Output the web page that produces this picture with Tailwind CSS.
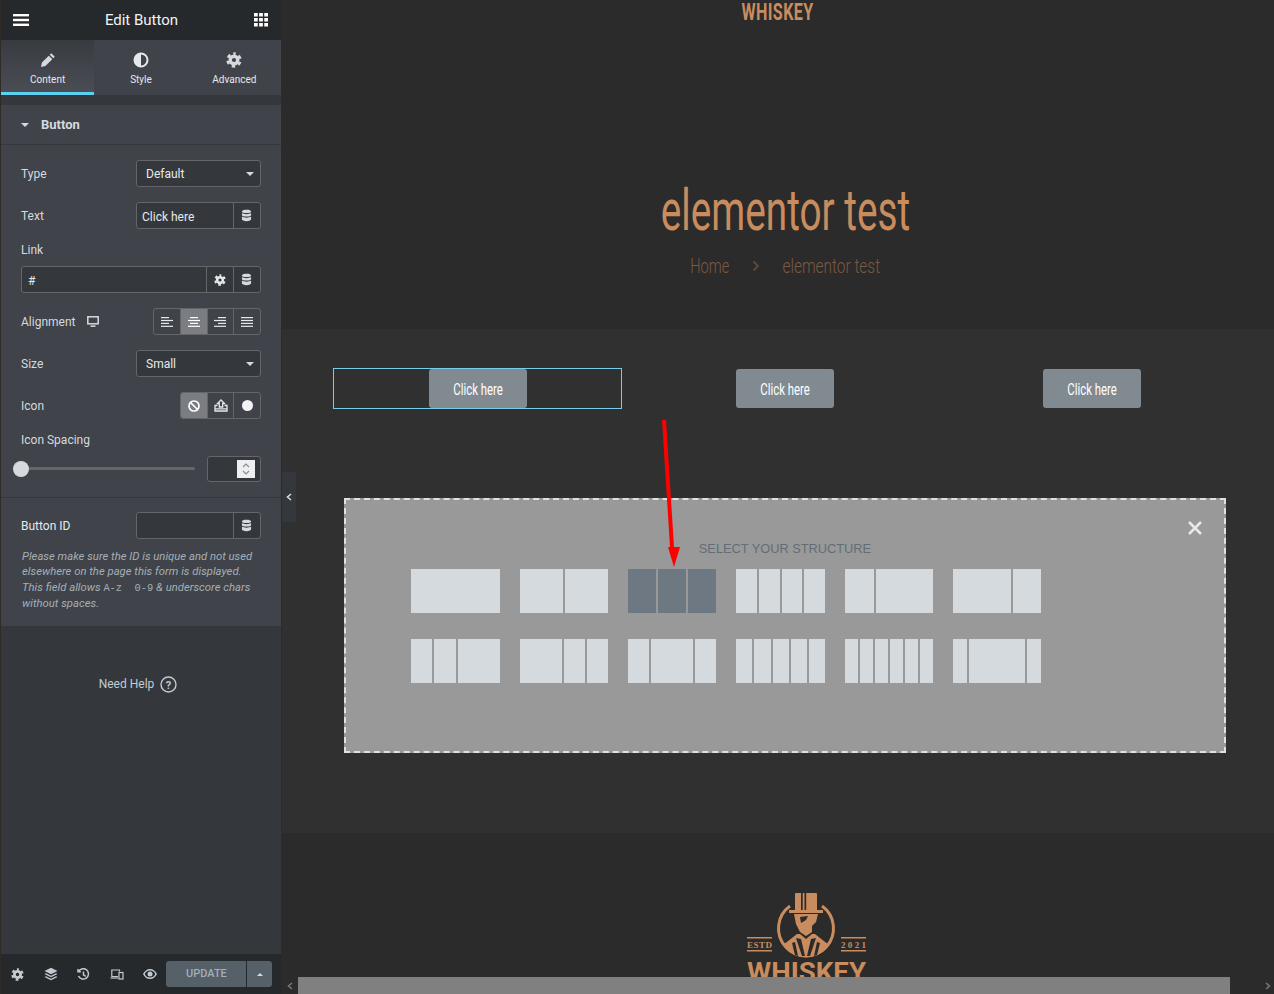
<!DOCTYPE html>
<html lang="en">
  <head>
    <meta charset="UTF-8" />
    <meta name="viewport" content="width=device-width, initial-scale=1.0" />
    <script src="https://cdn.jsdelivr.net/npm/@tailwindcss/browser@4"></script>
    <title>Edit Button</title>
  </head>
  <body class="h-[994px] w-[1274px] overflow-hidden bg-[#2b2b2b] font-['Roboto',sans-serif]">
    <svg width="0" height="0" class="absolute">
      <defs>
        <symbol id="gear" viewBox="0 0 16 16">
          <circle cx="8" cy="8" r="3.8" fill="none" stroke="currentColor" stroke-width="3.400" />
          <circle cx="8" cy="8" r="6.300" fill="none" stroke="currentColor" stroke-width="2.800" stroke-dasharray="3.400 3.200" stroke-dashoffset="1.700" transform="rotate(-90 8 8)" />
        </symbol>
        <symbol id="db" viewBox="0 0 12 14">
          <path fill="currentColor" d="M6 .6C3 .6 1 1.300 1 2.500S3 4.400 6 4.400s5-.7 5-1.900S9 .6 6 .6zM1 4.300v2.100c0 1.100 2 1.800 5 1.800s5-.7 5-1.800V4.300C10 5.200 8 5.500 6 5.500S2 5.200 1 4.300zM1 8.200v3c0 1.200 2 2 5 2s5-.8 5-2v-3c-1 .9-3 1.200-5 1.200S2 9.100 1 8.200z" />
        </symbol>
      </defs>
    </svg>

    <div class="flex h-full">
      <!-- Editor panel -->
      <aside class="relative z-10 flex h-full w-[282px] shrink-0 flex-col border-r border-[#2b2b2b] border-l border-l-[#2e2b29] bg-[#34383c] text-[12px] text-[#d5dadf]">
        <header class="flex h-10 items-center justify-between bg-[#26292c] pl-3 pr-[13px] text-white">
          <svg width="16" height="12" viewBox="0 0 16 12" fill="#fff"><rect y="0" width="16" height="2.400" /><rect y="4.800" width="16" height="2.400" /><rect y="9.600" width="16" height="2.400" /></svg>
          <h1 class="text-[15px] leading-none text-[#f1f3f5]">Edit Button</h1>
          <svg width="14" height="14" viewBox="0 0 15 14" preserveAspectRatio="none" fill="#fff">
            <rect x="0" width="4" height="3.500" /><rect x="5.500" width="4" height="3.500" /><rect x="11" width="4" height="3.500" />
            <rect x="0" y="5" width="4" height="3.500" /><rect x="5.500" y="5" width="4" height="3.500" /><rect x="11" y="5" width="4" height="3.500" />
            <rect x="0" y="10" width="4" height="3.500" /><rect x="5.500" y="10" width="4" height="3.500" /><rect x="11" y="10" width="4" height="3.500" />
          </svg>
        </header>

        <nav class="grid h-[55px] grid-cols-3 bg-[#404349] text-[10px] text-[#e6e9ec]">
          <div class="flex flex-col items-center border-b-[3px] border-[#5bd0f2] bg-gradient-to-b from-[#383b40] to-[#4a4d54] pt-[12px]">
            <svg width="16" height="16" viewBox="0 0 16 16" fill="#d5dadf"><path d="M11.300 1.200 14.800 4.700 13.200 6.300 9.700 2.800zM8.800 3.700 12.300 7.200 5.400 14.100 1 15 1.900 10.600z" /></svg>
            <span class="mt-[5px] leading-[14px]">Content</span>
          </div>
          <div class="flex flex-col items-center pt-[12px]">
            <svg width="16" height="16" viewBox="0 0 16 16"><circle cx="8" cy="8" r="6.500" fill="none" stroke="#e6e9ec" stroke-width="2" /><path fill="#e6e9ec" d="M8 1.500a6.500 6.500 0 0 0 0 13z" /></svg>
            <span class="mt-[5px] leading-[14px]">Style</span>
          </div>
          <div class="flex flex-col items-center pt-[12px]">
            <svg width="16" height="16" class="text-[#d5dadf]"><use href="#gear" /></svg>
            <span class="mt-[5px] leading-[14px]">Advanced</span>
          </div>
        </nav>

        <section class="mt-[10px] bg-[#404349]">
          <div class="flex h-10 items-center border-b border-[#34383c] pl-5 text-[13px] font-bold text-[#d5dadf]">
            <span class="h-0 w-0 border-x-[4px] border-t-[4px] border-x-transparent border-t-[#d5dadf]"></span>
            <span class="ml-3">Button</span>
          </div>

          <div class="px-5 pb-[15px]">
            <div class="mt-[15px] flex h-[27px] items-center justify-between">
              <label>Type</label>
              <div class="flex h-[27px] w-[125px] items-center justify-between rounded-[3px] border border-[#64666a] bg-[#34383c] pl-[9px] pr-[6px] text-[#e6e9ec]">
                Default
                <span class="h-0 w-0 border-x-[4px] border-t-[4px] border-x-transparent border-t-[#d5dadf]"></span>
              </div>
            </div>

            <div class="mt-[15px] flex h-[27px] items-center justify-between">
              <label>Text</label>
              <div class="flex h-[27px] w-[125px] items-center rounded-[3px] border border-[#64666a] bg-[#34383c] text-[#e6e9ec]">
                <span class="flex-1 pl-[5px] pt-[2px]">Click here</span>
                <span class="flex h-full w-[27px] items-center justify-center border-l border-[#64666a] pr-px"><svg width="11" height="13" class="text-[#d5dadf]"><use href="#db" /></svg></span>
              </div>
            </div>

            <label class="mt-[13px] block h-[17px] leading-[17px]">Link</label>
            <div class="mt-[7px] flex h-[27px] items-center rounded-[3px] border border-[#64666a] bg-[#34383c] text-[#e6e9ec]">
              <span class="flex-1 pl-[6px] pt-[2px]">#</span>
              <span class="flex h-full w-[27px] items-center justify-center border-l border-[#64666a]"><svg width="12" height="12" class="text-[#e6e9ec]"><use href="#gear" /></svg></span>
              <span class="flex h-full w-[27px] items-center justify-center border-l border-[#64666a] pr-px"><svg width="11" height="13" class="text-[#d5dadf]"><use href="#db" /></svg></span>
            </div>

            <div class="mt-[15px] flex h-[27px] items-center justify-between">
              <div class="flex items-center gap-[12px]">
                <label>Alignment</label>
                <svg width="12" height="11" viewBox="0 0 12 11" fill="none"><rect x=".8" y=".8" width="10.400" height="7" stroke="#d5dadf" stroke-width="1.500" /><rect x="3.500" y="9.400" width="5" height="1.500" fill="#d5dadf" /></svg>
              </div>
              <div class="flex h-[27px] w-[108px] overflow-hidden rounded-[3px] border border-[#64666a]">
                <span class="flex flex-1 items-center justify-center">
                  <svg width="12" height="10" viewBox="0 0 12 10" fill="#e6e9ec"><rect width="8" height="1.200" /><rect y="2.900" width="12" height="1.200" /><rect y="5.800" width="8" height="1.200" /><rect y="8.700" width="12" height="1.200" /></svg>
                </span>
                <span class="flex flex-1 items-center justify-center border-l border-[#64666a] bg-[#7a7d82]">
                  <svg width="12" height="10" viewBox="0 0 12 10" fill="#fff"><rect x="2" width="8" height="1.200" /><rect y="2.900" width="12" height="1.200" /><rect x="2" y="5.800" width="8" height="1.200" /><rect y="8.700" width="12" height="1.200" /></svg>
                </span>
                <span class="flex flex-1 items-center justify-center border-l border-[#64666a]">
                  <svg width="12" height="10" viewBox="0 0 12 10" fill="#e6e9ec"><rect x="4" width="8" height="1.200" /><rect y="2.900" width="12" height="1.200" /><rect x="4" y="5.800" width="8" height="1.200" /><rect y="8.700" width="12" height="1.200" /></svg>
                </span>
                <span class="flex flex-1 items-center justify-center border-l border-[#64666a]">
                  <svg width="12" height="10" viewBox="0 0 12 10" fill="#e6e9ec"><rect width="12" height="1.200" /><rect y="2.900" width="12" height="1.200" /><rect y="5.800" width="12" height="1.200" /><rect y="8.700" width="12" height="1.200" /></svg>
                </span>
              </div>
            </div>

            <div class="mt-[15px] flex h-[27px] items-center justify-between">
              <label>Size</label>
              <div class="flex h-[27px] w-[125px] items-center justify-between rounded-[3px] border border-[#64666a] bg-[#34383c] pl-[9px] pr-[6px] text-[#e6e9ec]">
                Small
                <span class="h-0 w-0 border-x-[4px] border-t-[4px] border-x-transparent border-t-[#d5dadf]"></span>
              </div>
            </div>

            <div class="mt-[15px] flex h-[27px] items-center justify-between">
              <label>Icon</label>
              <div class="flex h-[27px] w-[81px] overflow-hidden rounded-[3px] border border-[#64666a]">
                <span class="flex flex-1 items-center justify-center bg-[#7a7d82]">
                  <svg width="12" height="12" viewBox="0 0 12 12" fill="none" stroke="#fff" stroke-width="1.700"><circle cx="6" cy="6" r="5" /><path d="M2.500 2.500 9.500 9.500" /></svg>
                </span>
                <span class="flex flex-1 items-center justify-center border-l border-[#64666a]">
                  <svg width="14" height="13" viewBox="0 0 14 13" fill="none" stroke="#e6e9ec" stroke-width="1.300"><path d="M7 1 3.500 4.500H5.300V8H8.700V4.500H10.500z" /><path d="M3.500 6.500H1V12H13V6.500H10.500" /><path d="M1 9.800H13" /></svg>
                </span>
                <span class="flex flex-1 items-center justify-center border-l border-[#64666a]">
                  <span class="h-[11px] w-[11px] rounded-full bg-[#f1f3f5]"></span>
                </span>
              </div>
            </div>

            <label class="mt-[13px] block h-[17px] leading-[17px]">Icon Spacing</label>
            <div class="mt-[7px] flex h-[26px] items-center justify-between">
              <div class="relative -mt-px h-[3px] w-[174px] rounded-full bg-[#64666a]">
                <span class="absolute -left-2 -top-[6.500px] h-4 w-4 rounded-full bg-[#d5dadf]"></span>
              </div>
              <div class="flex h-[26px] w-[54px] items-center justify-end rounded-[3px] border border-[#64666a] bg-[#34383c] pr-[5px]">
                <span class="flex h-[18px] w-[18px] flex-col items-center justify-center gap-[2px] bg-[#eeeff1]">
                  <svg width="8" height="5" viewBox="0 0 8 5" fill="none" stroke="#8a8d92" stroke-width="1.200"><path d="M1 4 4 1 7 4" /></svg>
                  <svg width="8" height="5" viewBox="0 0 8 5" fill="none" stroke="#8a8d92" stroke-width="1.200"><path d="M1 1 4 4 7 1" /></svg>
                </span>
              </div>
            </div>
          </div>

          <div class="border-t border-[#34383c] px-5 pb-[14.500px] pt-[14px]">
            <div class="flex h-[27px] items-center justify-between">
              <label class="text-[#e6e9ec]">Button ID</label>
              <div class="flex h-[27px] w-[125px] items-center rounded-[3px] border border-[#64666a] bg-[#34383c]">
                <span class="flex-1"></span>
                <span class="flex h-full w-[27px] items-center justify-center border-l border-[#64666a] pr-px"><svg width="11" height="13" class="text-[#d5dadf]"><use href="#db" /></svg></span>
              </div>
            </div>
            <p class="ml-px mt-[9.500px] whitespace-nowrap text-[11.300px] italic leading-[15.500px] text-[#a4afb7]">
              Please make sure the ID is unique and not used<br />elsewhere on the page this form is displayed.<br />This field allows <code class="font-['Liberation_Mono',monospace] text-[10.400px] not-italic">A-z&nbsp;&nbsp;0-9</code> &amp; underscore chars<br />without spaces.
            </p>
          </div>
        </section>

        <div class="mt-[49px] flex items-center justify-center gap-[6px] pr-[6px] text-[#c2cbd2]">
          <span>Need Help</span>
          <svg width="17" height="17" viewBox="0 0 17 17" fill="none"><circle cx="8.500" cy="8.500" r="7.500" stroke="#c2cbd2" stroke-width="1.400" /><text x="8.500" y="12.500" text-anchor="middle" font-size="11" font-weight="700" fill="#c2cbd2">?</text></svg>
        </div>

        <footer class="mt-auto flex h-10 items-center bg-[#26292c] pl-[10px] pr-[9px]">
          <div class="flex w-[156px] items-center text-[#c2cbd2]">
            <span class="flex w-[33px]"><svg width="13" height="13"><use href="#gear" /></svg></span>
            <span class="flex w-[33px]">
              <svg width="14" height="14" viewBox="0 0 14 14" fill="currentColor"><path d="M7 .8 13.500 4 7 7.200.5 4z" /><path d="M2 6.200.5 7 7 10.200 13.500 7 12 6.200 7 8.700z" /><path d="M2 9.200.5 10 7 13.200 13.500 10 12 9.200 7 11.700z" /></svg>
            </span>
            <span class="flex w-[33px]">
              <svg width="13" height="13" viewBox="0 0 13 13" fill="none" stroke="currentColor" stroke-width="1.500"><path d="M1.800 3.200A5.200 5.200 0 1 1 1.500 8" /><path d="M6.500 3.500V6.800L8.800 8.300" /><path d="M1 1V3.800H3.800" /></svg>
            </span>
            <span class="flex w-[33px]">
              <svg width="14" height="12" viewBox="0 0 14 12" fill="none" stroke="currentColor" stroke-width="1.200"><path d="M8 8.500H1.800V2H9.500V3.500" /><path d="M.5 10H8" /><rect x="9" y="4.500" width="4" height="6.500" /></svg>
            </span>
            <span class="flex">
              <svg width="14" height="10" viewBox="0 0 14 10"><path fill="currentColor" d="M7 0C4 0 1.500 2 0 5c1.500 3 4 5 7 5s5.500-2 7-5c-1.500-3-4-5-7-5zm0 8.500A5.700 5.700 0 0 1 1.700 5 5.700 5.700 0 0 1 7 1.500 5.700 5.700 0 0 1 12.300 5 5.700 5.700 0 0 1 7 8.500z" /><circle cx="7" cy="5" r="2.500" fill="currentColor" /></svg>
            </span>
          </div>
          <div class="flex h-[26px] w-[106px] overflow-hidden rounded-[3px] bg-[#556068] text-[#a4afb7]">
            <span class="flex w-[80px] items-center justify-center pt-px text-[11px] font-medium">UPDATE</span>
            <span class="flex flex-1 items-center justify-center border-l border-[#26292c]">
              <span class="h-0 w-0 border-x-[3.500px] border-b-[3.500px] border-x-transparent border-b-[#d5dadf]"></span>
            </span>
          </div>
        </footer>
      </aside>

      <!-- Page preview -->
      <main class="relative h-full w-[992px] shrink-0 overflow-hidden">
        <div class="w-[1006px]">
          <section class="h-[329px] bg-[#2b2b2b]">
            <div class="h-6 pr-[14px] pt-px text-center">
              <span class="inline-block scale-x-[.7] text-[23px] font-bold leading-6 tracking-wide text-[#c98c5e]">WHISKEY</span>
            </div>
            <div class="mt-[152px] text-center">
              <h2 class="inline-block h-[70px] scale-x-[.68] text-[57px] font-normal leading-[70px] text-[#c98c5e]">elementor test</h2>
            </div>
            <div class="mt-[5px] flex items-center justify-center gap-[22px] text-[#7b5a43]">
              <span class="flex w-[40px] justify-center"><span class="inline-block scale-x-[.73] whitespace-nowrap text-[20px] font-light">Home</span></span>
              <svg width="8" height="12" viewBox="0 0 8 12" fill="none" stroke="#5d4a3c" stroke-width="1.800"><path d="M1.500 1.500 6 6 1.500 10.500" /></svg>
              <span class="flex w-[98px] justify-center"><span class="inline-block scale-x-[.77] whitespace-nowrap text-[20px] font-light">elementor test</span></span>
            </div>
          </section>

          <section class="relative h-[504px] bg-[#303030]">
            <div class="mx-auto w-[921px] pt-[40px]">
              <div class="grid grid-cols-3">
                <div class="-mt-px ml-[8px] mr-[10px] flex h-[41px] items-center justify-center border border-[#76cfea] pl-px">
                  <a class="flex h-[39px] w-[98px] items-center justify-center rounded-[3px] bg-[#818a91] pl-px pt-[3px] text-white"><span class="inline-block scale-x-[.67] whitespace-nowrap text-[17px]">Click here</span></a>
                </div>
                <div class="flex h-[39px] justify-center">
                  <a class="flex h-[39px] w-[98px] items-center justify-center rounded-[3px] bg-[#818a91] pt-[3px] text-white"><span class="inline-block scale-x-[.67] whitespace-nowrap text-[17px]">Click here</span></a>
                </div>
                <div class="flex h-[39px] justify-center">
                  <a class="flex h-[39px] w-[98px] items-center justify-center rounded-[3px] bg-[#818a91] pt-[3px] text-white"><span class="inline-block scale-x-[.67] whitespace-nowrap text-[17px]">Click here</span></a>
                </div>
              </div>

              <div class="relative mx-auto mt-[89px] h-[255px] w-[882px] border-2 border-dashed border-[#e0e0e0] bg-[#999999] pt-[41px]">
                <svg class="absolute right-[21px] top-[20px]" width="16" height="16" viewBox="0 0 16 16" stroke="#e6e9ec" stroke-width="2.500"><path d="M2 2 14 14M14 2 2 14" /></svg>
                <p class="text-center font-['Liberation_Sans',sans-serif] text-[12.800px] leading-4 text-[#636d76]">SELECT YOUR STRUCTURE</p>
                <div class="ml-[65.400px] mt-[12px] grid w-[630px] grid-cols-6 gap-x-[20px] gap-y-[26px]">
                  <div class="flex h-11 gap-[2px]"><span class="flex-1 bg-[#d5dadf]"></span></div>
                  <div class="flex h-11 gap-[2px]"><span class="flex-1 bg-[#d5dadf]"></span><span class="flex-1 bg-[#d5dadf]"></span></div>
                  <div class="flex h-11 gap-[2px]"><span class="flex-1 bg-[#6d7882]"></span><span class="flex-1 bg-[#6d7882]"></span><span class="flex-1 bg-[#6d7882]"></span></div>
                  <div class="flex h-11 gap-[2px]"><span class="flex-1 bg-[#d5dadf]"></span><span class="flex-1 bg-[#d5dadf]"></span><span class="flex-1 bg-[#d5dadf]"></span><span class="flex-1 bg-[#d5dadf]"></span></div>
                  <div class="flex h-11 gap-[2px]"><span class="flex-[1] bg-[#d5dadf]"></span><span class="flex-[2] bg-[#d5dadf]"></span></div>
                  <div class="flex h-11 gap-[2px]"><span class="flex-[2] bg-[#d5dadf]"></span><span class="flex-[1] bg-[#d5dadf]"></span></div>

                  <div class="flex h-11 gap-[2px]"><span class="flex-[1] bg-[#d5dadf]"></span><span class="flex-[1] bg-[#d5dadf]"></span><span class="flex-[2] bg-[#d5dadf]"></span></div>
                  <div class="flex h-11 gap-[2px]"><span class="flex-[2] bg-[#d5dadf]"></span><span class="flex-[1] bg-[#d5dadf]"></span><span class="flex-[1] bg-[#d5dadf]"></span></div>
                  <div class="flex h-11 gap-[2px]"><span class="flex-[1] bg-[#d5dadf]"></span><span class="flex-[2] bg-[#d5dadf]"></span><span class="flex-[1] bg-[#d5dadf]"></span></div>
                  <div class="flex h-11 gap-[2px]"><span class="flex-1 bg-[#d5dadf]"></span><span class="flex-1 bg-[#d5dadf]"></span><span class="flex-1 bg-[#d5dadf]"></span><span class="flex-1 bg-[#d5dadf]"></span><span class="flex-1 bg-[#d5dadf]"></span></div>
                  <div class="flex h-11 gap-[2px]"><span class="flex-1 bg-[#d5dadf]"></span><span class="flex-1 bg-[#d5dadf]"></span><span class="flex-1 bg-[#d5dadf]"></span><span class="flex-1 bg-[#d5dadf]"></span><span class="flex-1 bg-[#d5dadf]"></span><span class="flex-1 bg-[#d5dadf]"></span></div>
                  <div class="flex h-11 gap-[2px]"><span class="flex-[1] bg-[#d5dadf]"></span><span class="flex-[4] bg-[#d5dadf]"></span><span class="flex-[1] bg-[#d5dadf]"></span></div>
                </div>
              </div>
            </div>
          </section>

          <section class="bg-[#2b2b2b] pl-[464px] pt-[59px]">
            <svg width="122" height="90" viewBox="0 0 122 90" fill="#c98c5e">
              <!-- badge: top hat, head, coat -->
              <path fill="none" stroke="#c98c5e" stroke-width="3" d="M44 14A27.500 27.500 0 1 0 76 14" />
              <path d="M50 1H70Q71 1 71 2V18H77V21H43V18H49V2Q49 1 50 1z" />
              <rect x="55" y="1" width="1.700" height="17" fill="#2b2b2b" />
              <rect x="58.500" y="1" width="1.700" height="17" fill="#2b2b2b" />
              <path d="M48 22H72L70 30L66 34L66 40L60 44L54 40L50 32z" />
              <path d="M54 25 62 24 60 28 55 31z" fill="#2b2b2b" />
              <path d="M37 53 51 42 54 42 60 47 66 42 69 42 83 53A27.500 27.500 0 0 1 37 53z" />
              <path d="M50 46 55 47 59 64 56 64zM70 46 65 47 61 64 64 64z" fill="#2b2b2b" />
              <path d="M46 51 49 50 52 64 49 63zM74 51 71 50 68 64 71 63z" fill="#2b2b2b" />
              <rect x="1" y="45" width="25" height="1.500" /><rect x="1" y="58" width="25" height="1.500" />
              <rect x="95" y="45" width="25" height="1.500" /><rect x="95" y="58" width="25" height="1.500" />
              <text x="1" y="56" font-family="Liberation Serif" font-size="9" font-weight="700" textLength="25">ESTD</text>
              <text x="95" y="56" font-family="Liberation Serif" font-size="9" font-weight="700" textLength="25">2021</text>
              <text x="1" y="89" font-family="Roboto" font-size="26" font-weight="700" textLength="119" lengthAdjust="spacingAndGlyphs">WHISKEY</text>
            </svg>
          </section>
        </div>

        <!-- Annotation arrow over the page -->
        <svg class="absolute left-[375px] top-[415px]" width="24" height="156" viewBox="0 0 24 156" fill="#ff0000">
          <path d="M5 5 9 5 17 132H23L17 152 11 132H13z" />
        </svg>

        <!-- Panel collapse handle -->
        <div class="absolute left-0 top-[472px] flex h-[50px] w-[14px] items-center justify-center bg-[#34383c]">
          <svg width="6" height="8" viewBox="0 0 6 8" fill="none" stroke="#d5dadf" stroke-width="1.600"><path d="M5 1 1.500 4 5 7" /></svg>
        </div>

        <!-- Horizontal scrollbar -->
        <div class="absolute bottom-0 left-0 flex h-[17px] w-full items-center bg-[#2b2b2b]">
          <span class="flex w-[16px] justify-center"><svg width="6" height="8" viewBox="0 0 6 8" fill="none" stroke="#777" stroke-width="1.600"><path d="M5 1 1.500 4 5 7" /></svg></span>
          <span class="h-full w-[932px] bg-[#808080]"></span>
          <span class="flex flex-1 justify-end pr-[3px]"><svg width="6" height="8" viewBox="0 0 6 8" fill="none" stroke="#777" stroke-width="1.600"><path d="M1 1 4.500 4 1 7" /></svg></span>
        </div>
      </main>
    </div>
  </body>
</html>
